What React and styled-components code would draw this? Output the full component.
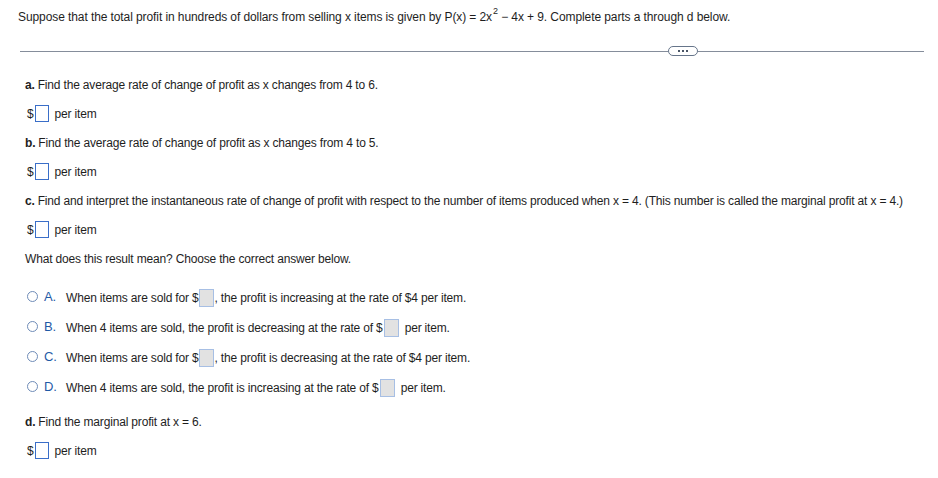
import React from "react";
import styled, { createGlobalStyle } from "styled-components";

const GlobalStyle = createGlobalStyle`
  body {
    margin: 0;
    background: #ffffff;
    font-family: "Liberation Sans", Arial, sans-serif;
    font-size: 12px;
    letter-spacing: -0.17px;
    color: #1e1e1e;
  }
`;

const Page = styled.div`
  width: 938px;
  height: 478px;
  overflow: hidden;
`;

const Header = styled.div`
  padding: 10px 0 0 18px;
  height: 14px;
  line-height: 14px;
  letter-spacing: -0.09px;
  white-space: nowrap;
`;

const Sup = styled.sup`
  font-size: 9px;
  vertical-align: 7px;
  line-height: 0;
  margin-left: 1px;
`;

const DividerRow = styled.div`
  display: flex;
  align-items: center;
  margin: 22px 14px 0 20px;
  height: 10px;
`;

const Line = styled.div`
  height: 1px;
  background: #858d9b;
  flex: ${(p) => (p.$grow ? 1 : "0 0 648px")};
`;

const Pill = styled.div`
  width: 28px;
  height: 8px;
  border: 1px solid #66758a;
  border-radius: 5px;
  background: #fff;
  display: flex;
  align-items: center;
  justify-content: center;
  gap: 2px;
`;

const Dot = styled.span`
  width: 2px;
  height: 2px;
  background: #4a5566;
`;

const Parts = styled.div`
  padding: 14px 0 0 25px;
`;

const Row = styled.div`
  height: 29px;
  display: flex;
  align-items: center;
  white-space: nowrap;
`;

const Label = styled.b`
  font-weight: bold;
  margin-right: 3px;
`;

const Answer = styled.div`
  display: flex;
  align-items: center;
  padding-left: 2px;
`;

const Box = styled.span`
  display: inline-block;
  box-sizing: border-box;
  width: ${(p) => (p.$fill ? 15 : 14)}px;
  height: ${(p) => (p.$fill ? 18 : 17)}px;
  border: 1px solid ${(p) => (p.$fill ? "#a7bfe4" : "#3a6ec8")};
  background: ${(p) => (p.$fill ? "#e2e2e2" : "#fff")};
  margin: 0 ${(p) => p.$mr || 0}px 0 1px;
`;

const Options = styled.div`
  padding: 10px 0 4px 2px;
`;

const Option = styled.div`
  height: 30px;
  display: flex;
  align-items: center;
  white-space: nowrap;
`;

const Radio = styled.span`
  width: 9px;
  height: 9px;
  border: 1.5px solid #6f8cb8;
  border-radius: 50%;
  margin-right: 6px;
  margin-top: -3px;
`;

const Letter = styled.span`
  color: #1f5aa6;
  font-size: 13px;
  width: 22px;
  margin-top: -4px;
`;

const OptText = styled.span`
  display: flex;
  align-items: center;
`;

const Per = styled.span`
  margin-left: 6px;
`;

const AnswerLine = () => (
  <Row>
    <Answer>
      $<Box />
      <Per>per item</Per>
    </Answer>
  </Row>
);

const options = [
  { letter: "A.", pre: "When items are sold for $", post: ", the profit is increasing at the rate of $4 per item.", gap: 0 },
  { letter: "B.", pre: "When 4 items are sold, the profit is decreasing at the rate of $", post: "per item.", gap: 6 },
  { letter: "C.", pre: "When items are sold for $", post: ", the profit is decreasing at the rate of $4 per item.", gap: 0 },
  { letter: "D.", pre: "When 4 items are sold, the profit is increasing at the rate of $", post: "per item.", gap: 6 },
];

export default function App() {
  return (
    <Page>
      <GlobalStyle />
      <Header>
        Suppose that the total profit in hundreds of dollars from selling x items is given by P(x) = 2x
        <Sup>2</Sup> − 4x + 9. Complete parts a through d below.
      </Header>
      <DividerRow>
        <Line />
        <Pill>
          <Dot />
          <Dot />
          <Dot />
        </Pill>
        <Line $grow />
      </DividerRow>
      <Parts>
        <Row>
          <Label>a.</Label> Find the average rate of change of profit as x changes from 4 to 6.
        </Row>
        <AnswerLine />
        <Row>
          <Label>b.</Label> Find the average rate of change of profit as x changes from 4 to 5.
        </Row>
        <AnswerLine />
        <Row>
          <Label>c.</Label> Find and interpret the instantaneous rate of change of profit with respect to the number of
          items produced when x = 4. (This number is called the marginal profit at x = 4.)
        </Row>
        <AnswerLine />
        <Row>What does this result mean? Choose the correct answer below.</Row>
        <Options>
          {options.map((o) => (
            <Option key={o.letter}>
              <Radio />
              <Letter>{o.letter}</Letter>
              <OptText>
                {o.pre}
                <Box $fill $mr={o.gap} />
                {o.post}
              </OptText>
            </Option>
          ))}
        </Options>
        <Row>
          <Label>d.</Label> Find the marginal profit at x = 6.
        </Row>
        <AnswerLine />
      </Parts>
    </Page>
  );
}
